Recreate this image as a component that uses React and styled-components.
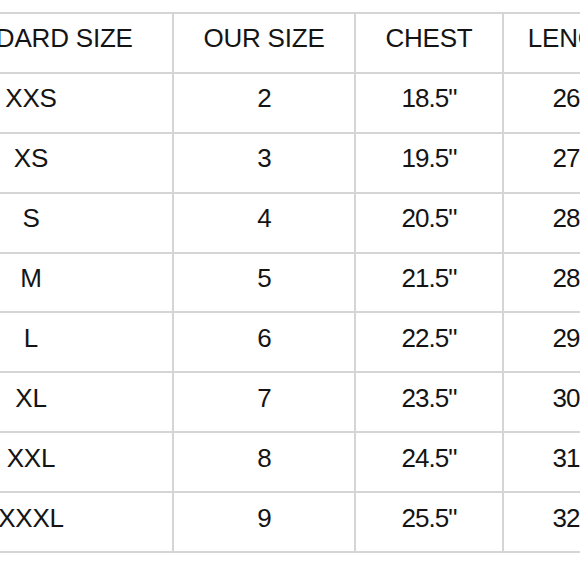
import React from "react";
import styled, { createGlobalStyle } from "styled-components";

const GlobalStyle = createGlobalStyle`
    html, body {
        margin: 0;
        padding: 0;
        background: #ffffff;
        overflow: hidden;
    }

    body {
        font-family: "Liberation Sans", Arial, sans-serif;
        color: #141414;
    }
`;

const Page = styled.div`
    width: 580px;
    height: 580px;
    overflow: hidden;
    padding-top: 12px;
    box-sizing: border-box;
`;

const Chart = styled.div`
    display: grid;
    grid-template-columns: 282px 180px 146px 152px;
    grid-auto-rows: 57.9px;
    gap: 2px;
    padding: 2px;
    width: max-content;
    margin-left: -112px;
    background: #d5d5d5;
`;

const Cell = styled.div`
    display: flex;
    align-items: center;
    justify-content: center;
    padding-bottom: 8px;
    box-sizing: border-box;
    background: #ffffff;
    font-size: 26px;
    letter-spacing: ${({ $tight }) => ($tight ? "-1px" : "-0.2px")};
    white-space: nowrap;
`;

const headings = ["STANDARD SIZE", "OUR SIZE", "CHEST", "LENGTH"];

const sizes = [
    ["XXS", "2", "18.5\"", "26.5\""],
    ["XS", "3", "19.5\"", "27.5\""],
    ["S", "4", "20.5\"", "28.0\""],
    ["M", "5", "21.5\"", "28.5\""],
    ["L", "6", "22.5\"", "29.5\""],
    ["XL", "7", "23.5\"", "30.5\""],
    ["XXL", "8", "24.5\"", "31.5\""],
    ["XXXL", "9", "25.5\"", "32.5\""],
];

export default function App() {
    return (
        <Page>
            <GlobalStyle />
            <Chart>
                {headings.map((h) => (
                    <Cell key={h}>{h}</Cell>
                ))}
                {sizes.map((row) =>
                    row.map((value, i) => (
                        <Cell key={row[0] + i} $tight={i > 0}>
                            {value}
                        </Cell>
                    ))
                )}
            </Chart>
        </Page>
    );
}
